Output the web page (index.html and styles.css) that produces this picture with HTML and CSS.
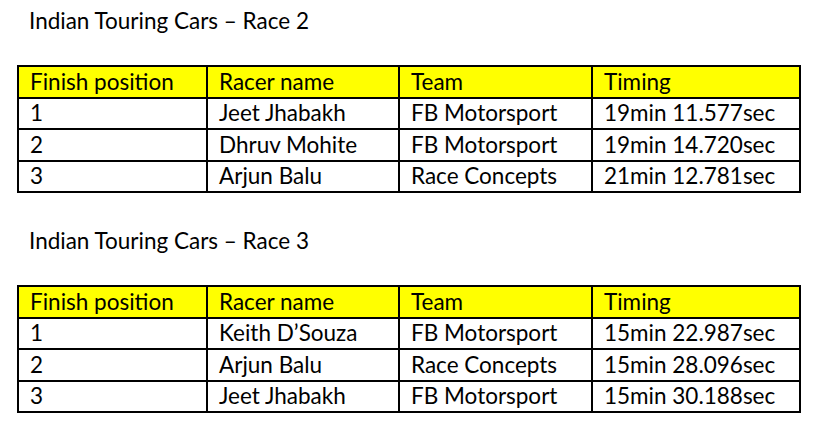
FILE: index.html
```html
<!DOCTYPE html>
<html>
<head>
<meta charset="utf-8">
<link rel="stylesheet" href="styles.css">
</head>
<body>
<main class="page">
  <section class="race">
    <h2 class="race-title">Indian Touring Cars – Race 2</h2>
    <table class="results">
      <colgroup>
        <col class="c1"><col class="c2"><col class="c3"><col class="c4">
      </colgroup>
      <thead>
        <tr><th>Finish position</th><th>Racer name</th><th>Team</th><th>Timing</th></tr>
      </thead>
      <tbody>
        <tr><td>1</td><td>Jeet Jhabakh</td><td>FB Motorsport</td><td>19min 11.577sec</td></tr>
        <tr><td>2</td><td>Dhruv Mohite</td><td>FB Motorsport</td><td>19min 14.720sec</td></tr>
        <tr><td>3</td><td>Arjun Balu</td><td>Race Concepts</td><td>21min 12.781sec</td></tr>
      </tbody>
    </table>
  </section>
  <section class="race">
    <h2 class="race-title">Indian Touring Cars – Race 3</h2>
    <table class="results">
      <colgroup>
        <col class="c1"><col class="c2"><col class="c3"><col class="c4">
      </colgroup>
      <thead>
        <tr><th>Finish position</th><th>Racer name</th><th>Team</th><th>Timing</th></tr>
      </thead>
      <tbody>
        <tr><td>1</td><td>Keith D’Souza</td><td>FB Motorsport</td><td>15min 22.987sec</td></tr>
        <tr><td>2</td><td>Arjun Balu</td><td>Race Concepts</td><td>15min 28.096sec</td></tr>
        <tr><td>3</td><td>Jeet Jhabakh</td><td>FB Motorsport</td><td>15min 30.188sec</td></tr>
      </tbody>
    </table>
  </section>
</main>
</body>
</html>
```
FILE: styles.css
```css
html, body {
  margin: 0;
  padding: 0;
  background: #ffffff;
}
body {
  width: 831px;
  height: 439px;
  overflow: hidden;
  font-family: Lato, "Open Sans", sans-serif;
  color: #000;
}
.page {
  display: flex;
  flex-direction: column;
  gap: 33px;
  padding: 6px 0 0 17px;
}
.race {
  display: flex;
  flex-direction: column;
  gap: 29px;
}
.race-title {
  margin: 0 0 0 12px;
  font-size: 22.5px;
  font-weight: normal;
  line-height: 30px;
}
.results {
  border-collapse: collapse;
  table-layout: fixed;
  width: 782px;
  font-size: 22.5px;
}
.results .c1 { width: 189px; }
.results .c2 { width: 192px; }
.results .c3 { width: 193px; }
.results .c4 { width: 208px; }
.results th,
.results td {
  border: 2px solid #000;
  padding: 0 0 0 11px;
  height: 29.5px;
  text-align: left;
  font-weight: normal;
  vertical-align: middle;
  white-space: nowrap;
  line-height: 24px;
}
.results th {
  background: #ffff00;
}
```
